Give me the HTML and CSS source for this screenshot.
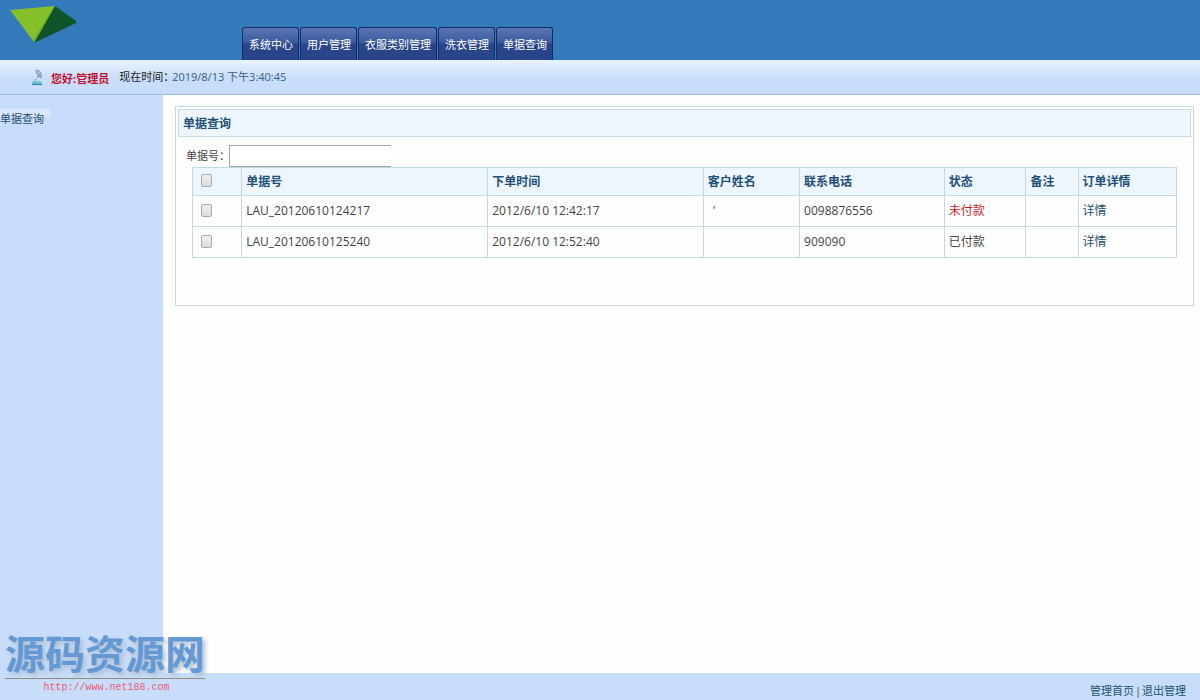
FILE: index.html
```html
<!DOCTYPE html>
<html lang="zh-CN">
<head>
<meta charset="utf-8">
<title>单据查询</title>
<link rel="stylesheet" href="styles.css">
</head>
<body>
<header class="header">
  <svg class="logo" width="80" height="48" viewBox="0 0 80 48" aria-hidden="true">
    <path fill="#86c12b" d="M10 10 55 6 34 42z"/>
    <path fill="#10542c" d="M55 6 76 21v2L34 43z"/>
    <path fill="#65ad24" d="M54 6h1L34 43l-1-2z"/>
  </svg>
  <nav class="nav">
    <a href="#">系统中心</a>
    <a href="#">用户管理</a>
    <a href="#">衣服类别管理</a>
    <a href="#">洗衣管理</a>
    <a href="#">单据查询</a>
  </nav>
</header>
<div class="status-bar">
  <svg class="user-icon" width="13" height="17" viewBox="0 0 13 17" aria-hidden="true">
    <path fill="#a9c3d6" stroke="#68869e" stroke-width=".8" d="M5 1c4 0 6 3 5 8C7 7 5 4 5 1z"/>
    <path stroke="#68869e" fill="none" d="M9 5 6 9"/>
    <path fill="#6bb5d5" d="M1 15.500c0-3 2-4 4-6l3 2c2 1 3 2 3 4z"/>
    <path fill="#b9e3ef" d="M3 12l3-2 3 3z"/>
    <path stroke="#38839f" d="M1 15.500h10"/>
  </svg>
  <span class="greeting">您好:管理员</span>
  <span class="clock-label">现在时间：</span>
  <time class="clock">2019/8/13 下午3:40:45</time>
</div>
<div class="body">
  <aside class="sidebar"><a href="#">单据查询</a></aside>
  <main class="main">
    <section class="panel">
      <h1 class="panel-title">单据查询</h1>
      <div class="search">
        <label for="order-no">单据号：</label>
        <input id="order-no" type="text">
      </div>
      <table class="orders">
        <colgroup>
          <col class="c-check"><col class="c-number"><col class="c-time"><col class="c-name"><col class="c-phone"><col class="c-state"><col class="c-note"><col class="c-detail">
        </colgroup>
        <thead>
          <tr>
            <th><input type="checkbox" aria-label="全选"></th>
            <th>单据号</th><th>下单时间</th><th>客户姓名</th><th>联系电话</th><th>状态</th><th>备注</th><th>订单详情</th>
          </tr>
        </thead>
        <tbody>
          <tr>
            <td><input type="checkbox" aria-label="LAU_20120610124217"></td>
            <td>LAU_20120610124217</td><td>2012/6/10 12:42:17</td><td class="name">'</td><td>0098876556</td><td class="unpaid">未付款</td><td></td><td><a href="#">详情</a></td>
          </tr>
          <tr>
            <td><input type="checkbox" aria-label="LAU_20120610125240"></td>
            <td>LAU_20120610125240</td><td>2012/6/10 12:52:40</td><td></td><td>909090</td><td>已付款</td><td></td><td><a href="#">详情</a></td>
          </tr>
        </tbody>
      </table>
    </section>
  </main>
</div>
<footer class="footer">
  <a href="#">管理首页</a><span>|</span><a href="#">退出管理</a>
</footer>
<div class="watermark">
  <div class="watermark-name">源码资源网</div>
  <div class="watermark-url">http://www.net188.com</div>
</div>
</body>
</html>
```
FILE: styles.css
```css
* {
  box-sizing: border-box;
}

body {
  display: flex;
  flex-direction: column;
  min-height: 100vh;
  margin: 0;
  background: #fefefe;
  color: #444;
  font: 12px/16px "Open Sans", "Noto Sans CJK SC", sans-serif;
}

a {
  color: #1f5070;
  text-decoration: none;
}

.header {
  display: flex;
  justify-content: flex-start;
  height: 60px;
  background: #337aba;
}

.logo {
  flex: none;
  margin-right: 162px;
}

.nav {
  display: flex;
  align-items: flex-end;
  gap: 1px;
}

.nav a {
  height: 33px;
  padding: 0 5px 0 6px;
  border: 1px solid #142c66;
  border-bottom: 0;
  border-radius: 3px 3px 0 0;
  background: linear-gradient(#5a77b3, #3c5b9e 45%, #2a4588 50%, #29458a);
  color: #fff;
  font-size: 11px;
  line-height: 34px;
}

.status-bar {
  display: flex;
  align-items: center;
  height: 35px;
  padding-left: 31px;
  border-bottom: 1px solid #9dbbdc;
  background: linear-gradient(#eaf3fe, #c8ddfa 55%, #c8ddfa);
  font-size: 11px;
}

.greeting {
  margin: 3px 10px 0 7px;
  color: #c4122f;
  font-weight: 700;
}

.clock-label {
  width: 53px;
  color: #222;
  white-space: nowrap;
}

.clock {
  color: #355f87;
}

.body {
  display: flex;
  flex: 1;
}

.sidebar {
  flex: none;
  width: 163px;
  padding-top: 14px;
  background: #c8ddfa;
  font-size: 11px;
}

.sidebar a {
  display: inline-block;
  padding-right: 6px;
  background: linear-gradient(#d8e7fb 40%, transparent 40%);
  line-height: 20px;
}

.main {
  flex: 1;
  padding: 11px 6px 11px 12px;
}

.panel {
  min-height: 200px;
  padding: 2px;
  border: 1px solid #c6d9e5;
}

.panel-title {
  height: 28px;
  margin: 0;
  padding-left: 4px;
  border: 1px solid #c6dde9;
  background: #edf5fd;
  color: #1f5078;
  font-size: 12px;
  font-weight: 700;
  line-height: 27px;
}

.search {
  display: flex;
  align-items: center;
  margin-top: 8px;
  padding-left: 8px;
  font-size: 11px;
}

.search label {
  width: 43px;
  white-space: nowrap;
}

.search input {
  width: 162px;
  height: 22px;
  padding: 0 4px;
  border: 1px solid #a5a5a5;
  border-right: 0;
  background: #fff;
}

.orders {
  width: calc(100% - 28px);
  margin-left: 14px;
  border-collapse: collapse;
  table-layout: fixed;
}

.orders th,
.orders td {
  height: 31px;
  padding: 0 4px;
  border: 1px solid #c1d9e4;
  text-align: left;
}

.orders th {
  height: 28px;
  background: #edf6fd;
  color: #1f5078;
}

.orders input {
  display: block;
  appearance: none;
  width: 11px;
  height: 13px;
  margin: 0 0 2px 4px;
  border: 1px solid #aaa;
  border-radius: 2px;
  background: linear-gradient(#eee, #ddd);
}

.c-check { width: 5%; }
.c-number { width: 25%; }
.c-time { width: 21.9%; }
.c-name { width: 9.8%; }
.c-phone { width: 14.7%; }
.c-state { width: 8.3%; }
.c-note { width: 5.3%; }

.orders .name {
  padding-left: 9px;
}

.orders .unpaid {
  color: #c81e1e;
}

.footer {
  display: flex;
  justify-content: flex-end;
  gap: 1px;
  height: 27px;
  padding: 10px 14px 0 0;
  background: #c8ddfa;
  color: #1f5070;
  font-size: 11px;
}

.watermark {
  position: absolute;
  bottom: 4px;
  left: 5px;
  width: 200px;
}

.watermark-name {
  padding-bottom: 3px;
  border-bottom: 1px solid #94887f;
  color: #6599d4;
  font-family: "Noto Sans CJK SC", sans-serif;
  font-size: 40px;
  font-weight: 700;
  line-height: 46px;
  text-shadow: 3px 3px 4px #aebfd4;
  white-space: nowrap;
}

.watermark-url {
  padding-left: 3px;
  color: #ec5a72;
  font: 10px/17px "Liberation Mono", monospace;
  text-align: center;
}
```
